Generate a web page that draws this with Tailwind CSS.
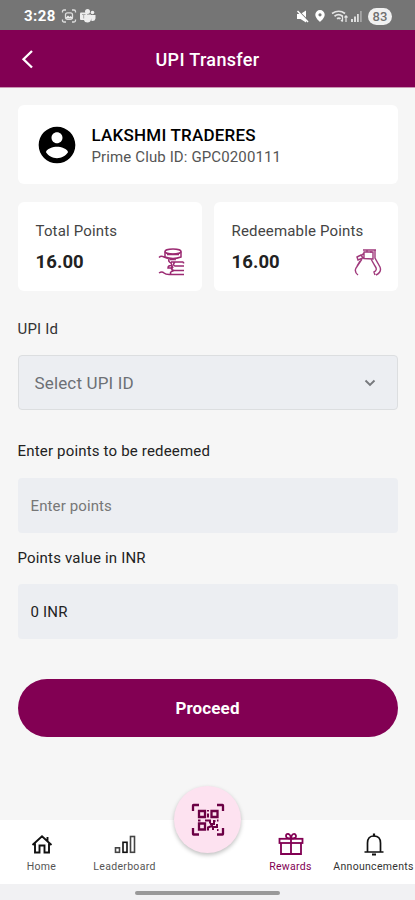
<!DOCTYPE html>
<html lang="en">
<head>
<meta charset="utf-8">
<meta name="viewport" content="width=device-width, initial-scale=1">
<title>UPI Transfer</title>
<script src="https://cdn.jsdelivr.net/npm/@tailwindcss/browser@4"></script>
</head>
<body class="bg-[#f6f6f6] font-[Roboto,sans-serif] text-[#222]">
<div class="flex h-[900px] w-[415px] flex-col overflow-hidden">
  <!-- Status bar -->
  <div class="flex h-[30px] shrink-0 items-center bg-[#757575] pt-[2px] pr-[23px] pl-6 text-white">
    <span class="w-[37px] text-[15px] leading-none font-bold tracking-[0.400px] whitespace-nowrap">3:28</span>
    <svg class="h-4 w-4" viewBox="0 0 16 16" fill="none" stroke="#ddd" stroke-width="1.300"><path d="M1.500 4.500v-1q0-1.500 1.500-1.500h2M11 2h2q1.500 0 1.500 1.500v1M14.500 11.500v1q0 1.500-1.500 1.500h-2M5 14h-2q-1.500 0-1.500-1.500v-1"/><rect x="4.500" y="4.800" width="7" height="6.500" rx="2"/><path d="M5 9.500l2-2 1.500 1.500 1-1 2 1.500v1H5z" fill="#eee" stroke="none"/></svg>
    <svg class="ml-[2px] h-4 w-[17px]" viewBox="0 0 17 16" fill="#eee"><circle cx="8.500" cy="3.500" r="2.500"/><circle cx="13.500" cy="4.500" r="1.800"/><path d="M4 6.500h8v5q-.5 3-3.500 3T5 12zM11.500 7h5v3.500q-.5 3-4 2.500z"/><rect x="1" y="4.500" width="7" height="7.500" rx="1"/><path d="M3 6.500h3.500M4.700 6.500v4" stroke="#aaa" stroke-width="1"/></svg>
    <div class="ml-auto flex items-center">
      <svg class="h-[13px] w-[13px]" viewBox="0 0 13 13"><path d="M1 4h3.500l5.500-3.500v12L4.500 9H1z" fill="white"/><path d="M2.500 1l10 10" stroke="#757575" stroke-width="1.300"/><path d="M1.500 1l10.500 11" stroke="white" stroke-width="1.500"/></svg>
      <svg class="ml-[6px] h-3 w-[10px]" viewBox="0 0 10 12"><path fill="white" fill-rule="evenodd" d="M5 0a4.700 4.700 0 0 1 4.700 4.700C9.700 8 5 12 5 12S.3 8 .3 4.700A4.700 4.700 0 0 1 5 0m0 3.200a1.600 1.600 0 1 0 0 3.200 1.600 1.600 0 0 0 0-3.200"/></svg>
      <svg class="ml-[6px] h-[13px] w-[17px]" viewBox="0 0 17 13" fill="none" stroke="#e5e5e5" stroke-width="1.700"><path d="M1 3.500Q8 -1 14 3.500M3.500 6.200q4-3 8 0M6 8.800q2-1.500 3.500 0"/><path d="M11.500 5.500v6m-1.500-1.500l1.500 1.700M15 12V6m-1.500 1.500L15 5.800l1.500 1.700" stroke-width="1.200"/></svg>
      <svg class="ml-[2px] h-3 w-[13px]" viewBox="0 0 13 12" fill="#ddd"><path d="M1 9h2v3H1zM4 6.500h2V12H4zM7 4h1.800v8H7z"/><path d="M10 1h1.800v11H10z" fill="#a5a5a5"/></svg>
      <span class="ml-[5px] flex h-[17px] w-6 items-center justify-center rounded-full bg-[#f0f0f0] text-[13px] leading-none font-medium text-[#707070]">83</span>
    </div>
  </div>

  <!-- Title bar -->
  <header class="grid h-[58px] shrink-0 grid-cols-[60px_1fr_60px] items-center border-b border-[#c995b3] bg-[#820053] text-white">
    <svg class="ml-[21px] h-5 w-3" viewBox="0 0 12 20" fill="none" stroke="white" stroke-width="2.300"><path d="M11 2L2.500 10.200l8.500 8.300"/></svg>
    <h1 class="pt-[2px] text-center text-[18px] leading-none font-medium tracking-[0.350px]">UPI Transfer</h1>
  </header>

  <main class="flex grow flex-col px-[17.500px] pt-[17px]">
    <section class="flex h-[79px] shrink-0 items-center rounded-[6px] bg-white pl-[17px]">
      <svg class="h-[44px] w-[44px]" viewBox="0 0 24 24"><path d="M12 2C6.480 2 2 6.480 2 12s4.480 10 10 10 10-4.480 10-10S17.520 2 12 2zm0 3c1.660 0 3 1.340 3 3s-1.340 3-3 3-3-1.340-3-3 1.340-3 3-3zm0 14.200c-2.500 0-4.710-1.280-6-3.220.03-1.990 4-3.080 6-3.080 1.990 0 5.970 1.090 6 3.080-1.290 1.940-3.500 3.220-6 3.220z"/></svg>
      <div class="ml-[13px] flex flex-col pt-[3px]">
        <span class="text-[17px] leading-[22px] font-medium tracking-[0.220px] whitespace-nowrap text-black">LAKSHMI TRADERES</span>
        <span class="text-[15px] leading-[22px] tracking-[0.120px] whitespace-nowrap text-[#555]">Prime Club ID: GPC0200111</span>
      </div>
    </section>

    <section class="mt-[18px] grid h-[89px] shrink-0 grid-cols-2 gap-3">
      <div class="rounded-[6px] bg-white pt-[19px] pr-4 pl-[18px]">
        <div class="text-[15px] leading-5 tracking-[0.170px] whitespace-nowrap text-[#444]">Total Points</div>
        <div class="mt-[7px] flex h-[32px] items-center justify-between">
          <span class="pb-1 text-[18.500px] leading-6 font-bold tracking-[0.100px]">16.00</span>
          <svg class="mb-[5px] h-7 w-[28px]" viewBox="0 0 28 28" fill="none" stroke="#9b2a72" stroke-width="1.500"><ellipse cx="15" cy="3.500" rx="8" ry="2.500"/><path d="M7 3.500v5.500q8 3 16 0V3.500M9 6.500h12M1 9.500q2-2 5-.5l4 1.500M1 25q3-2 5 0t7 1.500h13M11 11q-1 3 2 4l2 5M12 11.500h6M13 14h12.500M14 17.500h-1q-3 0-3 2.500h5M17 14q-3 3 0 4h9M14 18.500q-2 3 2 4h10M13 26q-2-2 3-3.500M25.500 14v1.500"/></svg>
        </div>
      </div>
      <div class="rounded-[6px] bg-white pt-[19px] pr-4 pl-[18px]">
        <div class="text-[15px] leading-5 tracking-[0.170px] whitespace-nowrap text-[#444]">Redeemable Points</div>
        <div class="mt-[7px] flex h-[32px] items-center justify-between">
          <span class="pb-1 text-[18.500px] leading-6 font-bold tracking-[0.100px]">16.00</span>
          <svg class="mb-[5px] h-7 w-[28px]" viewBox="0 0 28 28" fill="none" stroke="#a03a7c" stroke-width="1.400"><path d="M9 2h13M10 3.500v7l9 .5V4h-9M7 8l3-3M3 9l4-2 2 3-5 2zM21 2v8l5 9q2 5-4 8M17 11l4 7q3 4-1 6l1 3M8 11l-6 9q-2 4 2 7M6 13l-3 5M13 2v2M17 3v2"/></svg>
        </div>
      </div>
    </section>

    <form class="flex flex-col">
      <label class="mt-[28px] text-[15px] leading-5 tracking-[0.170px] text-[#333]">UPI Id</label>
      <div class="mt-[16px] flex h-[55px] items-center justify-between rounded-[4px] border border-[#dcdee0] bg-[#eceef2] pr-[21px] pl-[16px]">
        <span class="pt-[3px] text-[17px] tracking-[0.150px] text-[#6d7075]">Select UPI ID</span>
        <svg class="h-[8px] w-[12px]" viewBox="0 0 12 8" fill="none" stroke="#77797d" stroke-width="1.900"><path d="M1.500 1.500L6 6l4.500-4.500"/></svg>
      </div>
      <label class="mt-[31px] text-[15px] leading-5 tracking-[0.180px] text-[#222]">Enter points to be redeemed</label>
      <div class="mt-[17px] flex h-[55px] items-center rounded-[4px] bg-[#eceef2] pt-[2px] pl-[13px] text-[15px] tracking-[0.120px] text-[#777]">Enter points</div>
      <label class="mt-[15px] text-[15px] leading-5 tracking-[0.180px] text-[#222]">Points value in INR</label>
      <div class="mt-[16px] flex h-[55px] items-center rounded-[4px] bg-[#eceef2] pt-[2px] pl-[13px] text-[15px] tracking-[0.200px] text-[#222]">0 INR</div>
      <button type="button" class="mt-[40px] h-[58px] rounded-full bg-[#820053] pt-[2px] text-[17px] font-bold tracking-[0.130px] text-white">Proceed</button>
    </form>
  </main>

  <!-- Bottom navigation -->
  <nav class="relative grid h-[64px] shrink-0 grid-cols-5 bg-white text-[10.500px] leading-3 tracking-[0.300px] text-[#555]">
    <div class="flex flex-col items-center pt-3">
      <svg class="h-6 w-6" viewBox="0 0 24 24" fill="none" stroke="#111" stroke-width="1.900"><path d="M2.500 13L12 4.300l9.500 8.700M5 11.500V20.500h4.500v-7h5v7H19v-9M17.500 5v4"/></svg>
      <span class="mt-[5px]">Home</span>
    </div>
    <div class="flex flex-col items-center pt-3">
      <svg class="h-6 w-6" viewBox="0 0 24 24" fill="none" stroke="#444" stroke-width="1.600"><rect x="2.500" y="15.800" width="4" height="4.500"/><rect x="10" y="10.300" width="4" height="10" stroke="#111"/><rect x="17.500" y="4.500" width="4" height="15.800"/></svg>
      <span class="mt-[5px] whitespace-nowrap">Leaderboard</span>
    </div>
    <div></div>
    <div class="flex flex-col items-center pt-3 text-[#820053]">
      <svg class="h-6 w-[26px]" viewBox="0 0 26 24" fill="none" stroke="#820053" stroke-width="1.800"><rect x="1.500" y="6.800" width="23" height="4.200"/><path d="M3 11v11h20V11M13 6.500V22M13 6.500q-5 0-5-2.500t2.500-2Q12.500 2.500 13 6.500q.5-4 2.500-4.500T18 4 13 6.500"/></svg>
      <span class="mt-[5px]">Rewards</span>
    </div>
    <div class="flex flex-col items-center pt-3 text-[#333]">
      <svg class="h-6 w-6" viewBox="0 0 24 24" fill="none" stroke="#111" stroke-width="1.700"><path d="M2.500 20h19M5.500 20v-9q0-7 6.500-7t6.500 7v9"/><path d="M12 1.500v3M10 22.500h4" stroke-width="2.200"/></svg>
      <span class="mt-[5px] whitespace-nowrap">Announcements</span>
    </div>
    <div class="absolute top-[-34px] left-[174px] flex h-[67px] w-[67px] items-center justify-center rounded-full bg-[#fde2f0] shadow-[0_2px_4px_rgba(0,0,0,0.250)]">
      <svg class="h-[34px] w-[34px]" viewBox="0 0 34 34" fill="none" stroke="#6b0044" stroke-width="2.300"><path d="M2 8V2.500q0-.5.5-.5H8M26 2h5.500q.5 0 .5.500V8M32 25v6q0 .5-.5.500H26M8 31.500H2.500q-.5 0-.5-.5v-6"/><path d="M8 8h6v6H8zM20.500 8h6v6h-6zM8 20.500h6v6H8z"/><path d="M7 17.500h2.500M14 17.500h5v3M17 7v1.500M17 10.500v4M22 18h2.500M26 17.500h1.500M19 21h4v-3M17 27.500v-3l5-2M22 27v-3h4v-3M26 27h1.500" stroke-width="2"/></svg>
    </div>
  </nav>
  <div class="flex h-4 shrink-0 justify-center bg-[#f1f1f3] pt-[7px]"><div class="h-[4px] w-[145px] rounded-full bg-[#999]"></div></div>
</div>
</body>
</html>
